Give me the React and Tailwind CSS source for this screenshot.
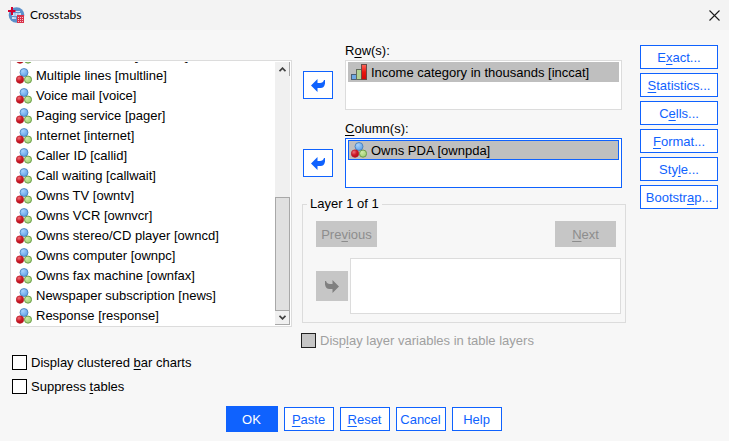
import React from "react";

const VARIABLES = [
  "Wireless service [wireless]",
  "Multiple lines [multline]",
  "Voice mail [voice]",
  "Paging service [pager]",
  "Internet [internet]",
  "Caller ID [callid]",
  "Call waiting [callwait]",
  "Owns TV [owntv]",
  "Owns VCR [ownvcr]",
  "Owns stereo/CD player [owncd]",
  "Owns computer [ownpc]",
  "Owns fax machine [ownfax]",
  "Newspaper subscription [news]",
  "Response [response]",
];

function Mnemonic({ text, at }) {
  if (at === undefined) return text;
  return (
    <>
      {text.slice(0, at)}
      <span className="underline decoration-1 underline-offset-2">{text[at]}</span>
      {text.slice(at + 1)}
    </>
  );
}

function NominalIcon() {
  return (
    <svg className="shrink-0" width="16" height="16" viewBox="0 0 16 16" aria-hidden="true">
      <defs>
        <radialGradient id="ballBlue" cx="0.35" cy="0.3" r="0.8">
          <stop offset="0" stopColor="#a9d3fb" />
          <stop offset="1" stopColor="#5a9de6" />
        </radialGradient>
        <radialGradient id="ballRed" cx="0.35" cy="0.3" r="0.8">
          <stop offset="0" stopColor="#f0707a" />
          <stop offset="0.5" stopColor="#cc1826" />
          <stop offset="1" stopColor="#b00c18" />
        </radialGradient>
        <radialGradient id="ballGreen" cx="0.35" cy="0.3" r="0.8">
          <stop offset="0" stopColor="#cfeaa8" />
          <stop offset="1" stopColor="#9acb6c" />
        </radialGradient>
      </defs>
      <circle cx="8" cy="4.5" r="4" fill="url(#ballBlue)" stroke="#3f78b8" strokeWidth="0.8" />
      <circle cx="4" cy="11.6" r="3.8" fill="url(#ballRed)" stroke="#b01a22" strokeWidth="0.5" />
      <circle cx="12" cy="11.6" r="3.6" fill="url(#ballGreen)" stroke="#5b9138" strokeWidth="0.8" />
    </svg>
  );
}

function OrdinalIcon() {
  return (
    <svg className="shrink-0" width="16" height="16" viewBox="0 0 16 16" aria-hidden="true">
      <defs>
        <linearGradient id="barRed" x1="0" x2="0" y1="0" y2="1">
          <stop offset="0" stopColor="#ff6a5c" />
          <stop offset="0.5" stopColor="#ea1410" />
          <stop offset="1" stopColor="#d00808" />
        </linearGradient>
      </defs>
      <rect x="0.5" y="10.5" width="5" height="5" fill="#6fa8e4" stroke="#4d5f73" />
      <rect x="5.5" y="5.5" width="5" height="10" fill="#b3d193" stroke="#626b5c" />
      <rect x="10.5" y="0.5" width="5" height="15" fill="url(#barRed)" stroke="#6b4a48" />
    </svg>
  );
}

function AppIcon() {
  return (
    <svg className="shrink-0" width="17" height="17" viewBox="0 0 17 17" aria-hidden="true">
      <circle cx="8.5" cy="8" r="7.8" fill="#5b8fca" />
      <path d="M7 4h5v1H7zM4 6h9v3H4zM4 10h4v2H4z" fill="#cfe0f3" />
      <path d="M7 5.500v6M10 5.500v4" stroke="#7fa9da" strokeWidth="0.8" />
      <path d="M0 4h7.500M4 0v8" stroke="#d3002f" strokeWidth="2" />
      <rect x="9" y="8" width="7" height="8" fill="#d8324a" />
      <path d="M10 10.500h6M10 12.500h6M10 14.500h6" stroke="#f7d3d8" strokeWidth="0.9" strokeDasharray="1 1" />
    </svg>
  );
}

function ArrowLeft() {
  return (
    <svg width="14" height="13" viewBox="0 0 14 13" fill="currentColor" aria-hidden="true">
      <path d="M0 6.500 6.500 0V4H9C11 4 12.500 3 13 1H14V4.500C13.500 7.500 12 9 9.500 9H6.500V13Z" />
    </svg>
  );
}

function ArrowRight() {
  return (
    <svg width="14" height="13" viewBox="0 0 14 13" fill="currentColor" aria-hidden="true">
      <path d="M14 6.500 7.500 0V4H5C3 4 1.500 3 1 1H0V4.500C0.500 7.500 2 9 4.500 9H7.500V13Z" />
    </svg>
  );
}

function Chevron({ d }) {
  return (
    <svg width="7" height="5" viewBox="0 0 7 5" fill="none" stroke="#404040" strokeWidth="1.8" aria-hidden="true">
      <path d={d} />
    </svg>
  );
}

function VariableList() {
  return (
    <div className="flex h-[267px] border border-[#dcdcdc] bg-white px-px pt-px">
      <ul role="listbox" aria-label="Variables" className="flex min-w-0 flex-1 flex-col justify-end overflow-hidden">
        {VARIABLES.map((name) => (
          <li key={name} role="option" aria-selected="false" className="flex h-5 shrink-0 items-center gap-1 pl-1 leading-5 whitespace-nowrap">
            <NominalIcon />
            {name}
          </li>
        ))}
      </ul>
      <div className="mb-px flex w-[15px] flex-col bg-[#f0f0f0]">
        <button aria-label="Scroll up" className="flex h-3.5 items-center justify-center border-r border-[#a8a8a8]">
          <Chevron d="M0.500 4.200 3.500 1.200 6.500 4.200" />
        </button>
        <div className="flex-1" />
        <div className="h-[114px] border border-[#a8a8a8] bg-[#e0e0e0]" />
        <button aria-label="Scroll down" className="flex h-3.5 items-center justify-center border-r border-b border-[#a8a8a8]">
          <Chevron d="M0.500 0.800 3.500 3.800 6.500 0.800" />
        </button>
      </div>
    </div>
  );
}

function TargetList({ id, label, at, item, icon, active }) {
  return (
    <div className="mr-1 ml-0.5 flex items-end gap-3">
      <button
        aria-label={`Move to ${label}`}
        className="mb-[11px] flex h-7 w-[30px] shrink-0 items-center justify-center border border-[#0f62fe] bg-white text-[#0f62fe]"
      >
        <ArrowLeft />
      </button>
      <div className="min-w-0 flex-1">
        <div id={id} className="leading-[18px]">
          <Mnemonic text={label} at={at} />
        </div>
        <ul
          role="listbox"
          aria-labelledby={id}
          className={`h-[50px] border bg-white px-0.5 py-px ${active ? "border-[#0f62fe]" : "border-[#dcdcdc]"}`}
        >
          <li
            role="option"
            aria-selected="true"
            className={`flex h-5 items-center gap-1 border bg-[#bfbfbf] pl-0.5 whitespace-nowrap ${active ? "border-[#0f62fe]" : "border-[#bfbfbf]"}`}
          >
            {icon}
            <span className="pt-0.5">{item}</span>
          </li>
        </ul>
      </div>
    </div>
  );
}

function CheckRow({ text, at, disabled }) {
  return (
    <label className={`flex items-center gap-1 leading-[15px] whitespace-nowrap ${disabled ? "text-[#a0a0a0]" : ""}`}>
      <input
        type="checkbox"
        disabled={disabled}
        className="size-[15px] shrink-0 appearance-none border border-black bg-white checked:bg-[#0f62fe] disabled:border-[#222222] disabled:bg-[#c6c6c6]"
      />
      <span>
        <Mnemonic text={text} at={at} />
      </span>
    </label>
  );
}

function OutlineButton({ text, at, wide }) {
  return (
    <button
      className={`flex h-6 items-center justify-center border border-[#0f62fe] bg-white pt-0.5 text-[#0f62fe] ${wide ? "w-full" : "w-[50px]"}`}
    >
      <span>
        <Mnemonic text={text} at={at} />
      </span>
    </button>
  );
}

export default function App() {
  return (
    <div className="flex min-h-screen flex-col bg-[#f7f7f7] font-['Liberation_Sans',Arial,sans-serif] text-[13px] leading-5 text-black">
      <header className="flex h-[30px] items-center gap-[5px] bg-[#f3f3f3] pr-2 pl-2 font-['Lato','Segoe_UI',sans-serif] text-xs">
        <AppIcon />
        <h1 className="flex-1">Crosstabs</h1>
        <button aria-label="Close" className="flex size-3.5 items-center justify-center">
          <svg width="11" height="11" viewBox="0 0 11 11" stroke="#1a1a1a" strokeWidth="1.1" aria-hidden="true">
            <path d="M0.500 0.500 10.500 10.500M10.500 0.500 0.500 10.500" />
          </svg>
        </button>
      </header>

      <main className="flex pr-[11px] pl-2.5">
        <section className="min-w-0 flex-[282] pt-[30px]">
          <VariableList />
          <div className="mt-7 ml-0.5 flex flex-col gap-[9px]">
            <CheckRow text="Display clustered bar charts" at={18} />
            <CheckRow text="Suppress tables" at={9} />
          </div>
        </section>

        <section className="ml-[9px] min-w-0 flex-[325] pt-3">
          <div className="flex flex-col gap-2.5">
            <TargetList id="rows" label="Row(s):" at={1} item="Income category in thousands [inccat]" icon={<OrdinalIcon />} />
            <TargetList id="columns" label="Column(s):" at={0} item="Owns PDA [ownpda]" icon={<NominalIcon />} active />
          </div>

          <fieldset className="mt-[7px] ml-px min-w-0 border border-[#dcdcdc] pt-2 pr-1 pb-2 pl-[13px]">
            <legend className="-ml-[9px] px-[3px] leading-[18px]">Layer 1 of 1</legend>
            <div className="mr-[5px] flex justify-between">
              <button disabled className="h-[26px] w-[61px] bg-[#c6c6c6] pt-0.5 text-[#8d8d8d]">
                <Mnemonic text="Previous" at={3} />
              </button>
              <button disabled className="h-[26px] w-[61px] bg-[#c6c6c6] pt-0.5 text-[#8d8d8d]">
                <Mnemonic text="Next" at={0} />
              </button>
            </div>
            <div className="mt-[11px] flex items-center gap-0.5">
              <button disabled aria-label="Move to layer" className="flex h-[30px] w-8 items-center justify-center bg-[#c6c6c6] text-[#808080]">
                <ArrowRight />
              </button>
              <ul role="listbox" aria-label="Layer variables" className="h-14 flex-1 border border-[#dcdcdc] bg-white" />
            </div>
          </fieldset>

          <div className="mt-2.5">
            <CheckRow text="Display layer variables in table layers" at={4} disabled />
          </div>
        </section>

        <nav aria-label="Options" className="ml-3.5 flex w-[78px] shrink-0 flex-col gap-1 pt-[15px]">
          <OutlineButton text="Exact..." at={1} wide />
          <OutlineButton text="Statistics..." at={0} wide />
          <OutlineButton text="Cells..." at={1} wide />
          <OutlineButton text="Format..." at={0} wide />
          <OutlineButton text="Style..." at={3} wide />
          <OutlineButton text="Bootstrap..." at={7} wide />
        </nav>
      </main>

      <footer className="mt-3 flex items-center justify-center gap-1.5 pr-0.5">
        <button className="h-[26px] w-[52px] bg-[#0f62fe] pt-0.5 text-white">OK</button>
        <OutlineButton text="Paste" at={0} />
        <OutlineButton text="Reset" at={0} />
        <OutlineButton text="Cancel" />
        <OutlineButton text="Help" />
      </footer>
    </div>
  );
}
